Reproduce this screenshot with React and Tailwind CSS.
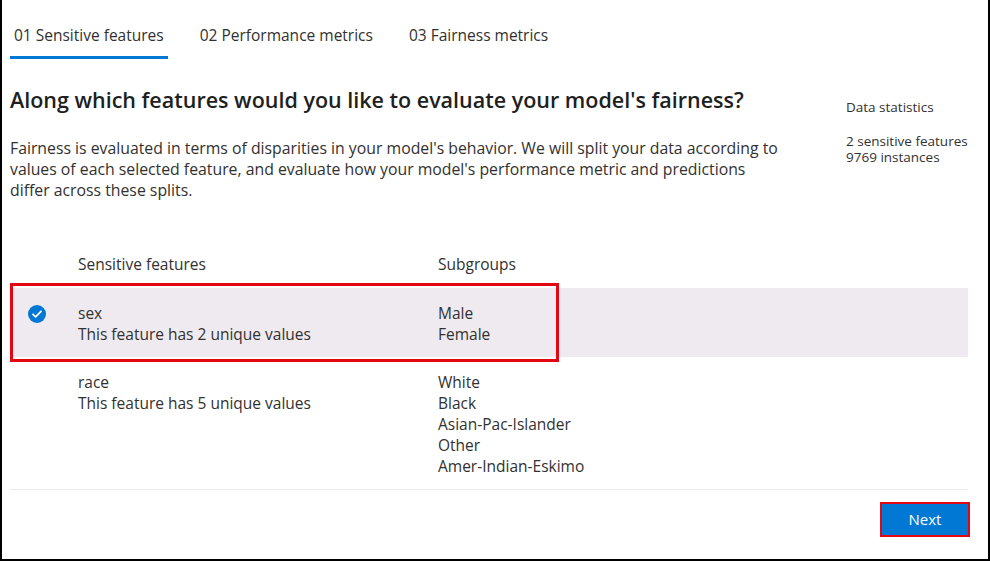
const features = [
  {
    name: "sex",
    count: 2,
    subgroups: ["Male", "Female"],
    selected: true,
  },
  {
    name: "race",
    count: 5,
    subgroups: ["White", "Black", "Asian-Pac-Islander", "Other", "Amer-Indian-Eskimo"],
    selected: false,
  },
];

const tabs = ["01 Sensitive features", "02 Performance metrics", "03 Fairness metrics"];

const CheckCircle = () => (
  <svg width="18" height="18" viewBox="0 0 18 18">
    <circle cx="9" cy="9" r="9" fill="#0078d4" />
    <path d="M5 9.3l2.6 2.5L13 6.4" stroke="white" strokeWidth="1.8" fill="none" strokeLinecap="round" strokeLinejoin="round" />
  </svg>
);

export default function App() {
  return (
    <div
      className="relative flex h-[561px] w-[990px] flex-col border-x-2 border-b-2 border-black bg-white text-[#323130]"
      style={{ fontFamily: "'Open Sans', 'Noto Sans', sans-serif" }}
    >
      {/* tabs */}
      <div className="mt-[22px] flex gap-[28px] pl-[8px]">
        {tabs.map((t, i) => (
          <div
            key={t}
            className={`px-[4px] pb-[8px] text-[15.5px] leading-[26px] ${
              i === 0 ? "border-b-[3px] border-[#0078d4]" : "border-b-[3px] border-transparent"
            }`}
          >
            {t}
          </div>
        ))}
      </div>

      <div className="flex pl-[8px] pr-[20px]">
        <div className="w-[790px]">
          <h1 className="mt-[26px] text-[21.5px] font-semibold leading-[30px] text-[#201f1e]">
            Along which features would you like to evaluate your model's fairness?
          </h1>
          <p className="mt-[23px] w-[775px] text-[15.8px] leading-[21px]">
            Fairness is evaluated in terms of disparities in your model's behavior. We will split your data according to
            values of each selected feature, and evaluate how your model's performance metric and predictions
            differ across these splits.
          </p>
        </div>
        <div className="ml-[46px] mt-[40px] text-[13.5px] leading-[16px]">
          <div>Data statistics</div>
          <div className="mt-[18px]">2 sensitive features</div>
          <div>9769 instances</div>
        </div>
      </div>

      {/* table */}
      <div className="mt-[53px] pl-[8px] pr-[20px]">
        <div className="flex pb-[13px] text-[15.5px] leading-[21px]">
          <div className="w-[68px]" />
          <div className="w-[360px]">Sensitive features</div>
          <div>Subgroups</div>
        </div>
        {features.map((f) => (
          <div
            key={f.name}
            className={`flex pt-[15px] pb-[12px] text-[15.5px] leading-[21px] ${f.selected ? "bg-[#efeaef]" : ""}`}
          >
            <div className="flex w-[68px] items-start pl-[18px] pt-[2px]">
              {f.selected && <CheckCircle />}
            </div>
            <div className="w-[360px]">
              <div>{f.name}</div>
              <div>This feature has {f.count} unique values</div>
            </div>
            <div>
              {f.subgroups.map((s) => (
                <div key={s}>{s}</div>
              ))}
            </div>
          </div>
        ))}
        <div className="border-t border-[#edebe9]" />
      </div>

      <div className="flex justify-end pr-[18px] pt-[12px]">
        <button className="h-[35px] w-[90px] border-2 border-[#e30613] bg-[#0078d4] text-[15px] text-white">
          Next
        </button>
      </div>

      {/* annotation box */}
      <div className="pointer-events-none absolute left-[8px] top-[283px] h-[79px] w-[549px] border-[3px] border-[#e30613]" />
    </div>
  );
}
